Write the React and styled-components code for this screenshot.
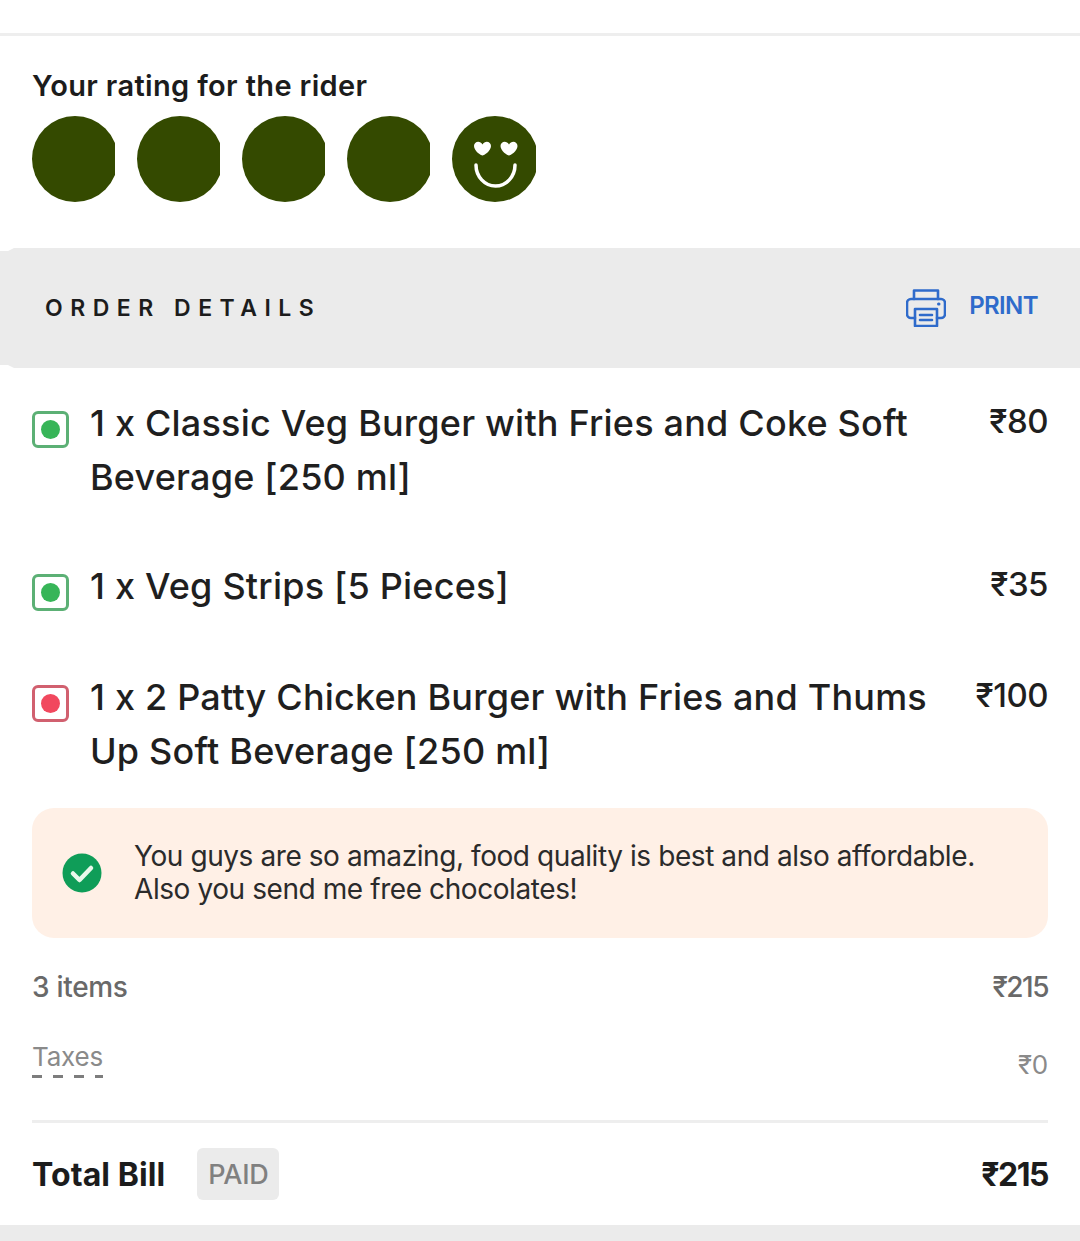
import React from "react";
import styled, { createGlobalStyle } from "styled-components";

const Global = createGlobalStyle`
  html, body { margin: 0; padding: 0; background: #fff; }
  body { font-family: Inter, "Liberation Sans", sans-serif; color: #1c1c1c; }
`;
const Page = styled.div`
  width: 1080px; height: 1241px; overflow: hidden; background: #fff;
  display: flex; flex-direction: column; padding-top: 33px; box-sizing: border-box;
`;
const Rule = styled.div`height: 3px; background: #eeeeee; flex: none;`;
const RatingSection = styled.section`
  height: 212px; padding: 32px 32px 0; box-sizing: border-box; flex: none;
`;
const RatingTitle = styled.h2`
  margin: 0; font-size: 29px; line-height: 36px; font-weight: 600; letter-spacing: 0.35px; color: #1c1c1c;
`;
const Faces = styled.div`display: flex; gap: 22px; margin-top: 12px;`;
const Face = styled.div`
  width: ${p => (p.$wide ? 84 : 83)}px; height: 86px; overflow: hidden; flex: none; position: relative;
  &::before { content: ""; display: block; width: 86px; height: 86px; border-radius: 50%; background: #344a00; }
`;
const FaceArt = styled.svg`position: absolute; left: 0; top: 0;`;
const Banner = styled.div`
  height: 120px; background: #ebebeb; flex: none; padding: 0 42px 0 45px; box-sizing: border-box;
  display: flex; align-items: center; justify-content: space-between;
  clip-path: polygon(0 3px, 8px 3px, 14px 0, 100% 0, 100% 100%, 14px 100%, 8px 117px, 0 117px);
`;
const BannerTitle = styled.div`
  font-size: 23px; font-weight: 600; letter-spacing: 7.5px; color: #1c1c1c; line-height: 1; text-transform: uppercase;
`;
const PrintAction = styled.div`display: flex; align-items: center; gap: 23px; color: #2f6bcb;`;
const PrintLabel = styled.span`font-size: 24px; font-weight: 600; letter-spacing: -0.6px; margin-top: -6px;`;
const Items = styled.div`padding: 28px 32px 0; flex: none; display: flex; flex-direction: column;`;
const Item = styled.div`
  display: grid; grid-template-columns: 37px 1fr auto; column-gap: 21px; align-items: start;
  margin-bottom: ${p => p.$gap}px;
`;
const DietMark = styled.div`
  width: 37px; height: 37px; box-sizing: border-box; margin-top: 15px;
  border: 3px solid ${p => p.$edge}; border-radius: 6px;
  display: flex; align-items: center; justify-content: center;
  &::after { content: ""; width: 19px; height: 19px; border-radius: 50%; background: ${p => p.$dot}; }
`;
const ItemName = styled.div`
  font-size: 36px; line-height: 54px; font-weight: 500; letter-spacing: 0.2px; color: #1f1f1f;
`;
const ItemPrice = styled.div`font-size: 33px; line-height: 50px; font-weight: 500; letter-spacing: -0.5px; color: #1f1f1f;`;
const Note = styled.div`
  margin: 0 32px; height: 130px; flex: none; background: #fff0e6; border-radius: 22px; box-sizing: border-box;
  padding: 0 30px; display: flex; align-items: center; gap: 32px;
`;
const NoteText = styled.p`
  margin: 0; font-size: 28px; line-height: 33px; font-weight: 400; letter-spacing: -0.42px; color: #2b2b2b;
`;
const Summary = styled.div`padding: 29px 32px 0; flex: none;`;
const SummaryRow = styled.div`
  display: flex; justify-content: space-between; align-items: center; font-size: 28px; font-weight: 500;
  color: #696969; line-height: 40px; letter-spacing: -0.3px;
`;
const SummaryPrice = styled.span`letter-spacing: -1.5px;`;
const TaxRow = styled.div`
  display: flex; justify-content: space-between; align-items: flex-end; margin-top: 24px; height: 48px;
  color: #8a8a8a; font-size: 26px; letter-spacing: -0.2px;
`;
const TaxLabel = styled.span`
  line-height: 32px; padding-bottom: 5px; margin-bottom: 1px;
  background: repeating-linear-gradient(90deg, #7d7d7d 0 10px, transparent 10px 21px) left bottom / 100% 3px no-repeat;
`;
const TaxValue = styled.span`line-height: 34px; margin-bottom: -3px;`;
const TotalRow = styled.div`
  margin-top: 41px; border-top: 3px solid #eeeeee; height: 105px; box-sizing: border-box;
  display: flex; align-items: center; justify-content: space-between;
`;
const TotalLeft = styled.div`display: flex; align-items: center; gap: 32px;`;
const TotalLabel = styled.span`font-size: 32px; font-weight: 700; letter-spacing: 0.1px; color: #1c1c1c;`;
const PaidBadge = styled.span`
  background: #ebebeb; color: #808080; border-radius: 6px; font-size: 27px; font-weight: 500;
  width: 82px; height: 52px; display: flex; align-items: center; justify-content: center; letter-spacing: -0.3px;
`;
const TotalPrice = styled.span`font-size: 32px; font-weight: 700; letter-spacing: -1.5px; color: #1c1c1c;`;
const Footer = styled.div`flex: 1; background: #ebebeb;`;
const CheckBadge = styled.svg`flex: none;`;

const items = [
  { name: <>1 x Classic Veg Burger with Fries and Coke Soft<br />Beverage [250 ml]</>, price: "₹80", veg: true, gap: 55 },
  { name: "1 x Veg Strips [5 Pieces]", price: "₹35", veg: true, gap: 57 },
  { name: <>1 x 2 Patty Chicken Burger with Fries and Thums<br />Up Soft Beverage [250 ml]</>, price: "₹100", veg: false, gap: 30 },
];

export default function App() {
  return (
    <Page>
      <Global />
      <Rule />
      <RatingSection>
        <RatingTitle>Your rating for the rider</RatingTitle>
        <Faces>
          <Face /><Face /><Face /><Face />
          <Face $wide>
            <FaceArt width="84" height="86" viewBox="0 0 84 86">
              <path fill="#fff" d="M30.5 39.500c-1.500 0-8.500-4.500-8.500-9.500 0-4.500 6-6 8.500-1.500 2.500-4.500 8.500-3 8.500 1.500 0 5-7 9.500-8.500 9.500zM57 39.500c-1.500 0-8.500-4.500-8.500-9.500 0-4.500 6-6 8.500-1.500 2.500-4.500 8.500-3 8.500 1.500 0 5-7 9.500-8.500 9.500z" />
              <path fill="none" stroke="#fff" strokeWidth="3.500" strokeLinecap="round" d="M24 49a19.500 21 0 0 0 39 0" />
            </FaceArt>
          </Face>
        </Faces>
      </RatingSection>
      <Banner>
        <BannerTitle>Order Details</BannerTitle>
        <PrintAction>
          <svg width="40" height="38" viewBox="0 0 40 38" fill="none" stroke="#2f6bcb" strokeWidth="2.600" strokeLinejoin="round" strokeLinecap="round">
            <path d="M8 10V1.500h24V10" />
            <path d="M9 29H5a4 4 0 0 1-4-4V14a4 4 0 0 1 4-4h30a4 4 0 0 1 4 4v11a4 4 0 0 1-4 4h-4" />
            <path d="M9 20h22v17H9z" />
            <path d="M14 26h12M14 31h12" />
            <path d="M32.500 15h.5" strokeWidth="3" />
          </svg>
          <PrintLabel>PRINT</PrintLabel>
        </PrintAction>
      </Banner>
      <Items>
        {items.map((it, i) => (
          <Item key={i} $gap={it.gap}>
            <DietMark $edge={it.veg ? "#5cb075" : "#d1606f"} $dot={it.veg ? "#37b558" : "#f1485e"} />
            <ItemName>{it.name}</ItemName>
            <ItemPrice>{it.price}</ItemPrice>
          </Item>
        ))}
      </Items>
      <Note>
        <CheckBadge width="40" height="40" viewBox="0 0 40 40">
          <circle cx="20" cy="20" r="19.500" fill="#0f9d58" />
          <path d="M11 20.500l6.500 6.500L29 15" fill="none" stroke="#e9f8ea" strokeWidth="4.500" strokeLinecap="round" strokeLinejoin="round" />
        </CheckBadge>
        <NoteText>You guys are so amazing, food quality is best and also affordable.<br />Also you send me free chocolates!</NoteText>
      </Note>
      <Summary>
        <SummaryRow><span>3 items</span><SummaryPrice>₹215</SummaryPrice></SummaryRow>
        <TaxRow><TaxLabel>Taxes</TaxLabel><TaxValue>₹0</TaxValue></TaxRow>
        <TotalRow>
          <TotalLeft>
            <TotalLabel>Total Bill</TotalLabel>
            <PaidBadge>PAID</PaidBadge>
          </TotalLeft>
          <TotalPrice>₹215</TotalPrice>
        </TotalRow>
      </Summary>
      <Footer />
    </Page>
  );
}
